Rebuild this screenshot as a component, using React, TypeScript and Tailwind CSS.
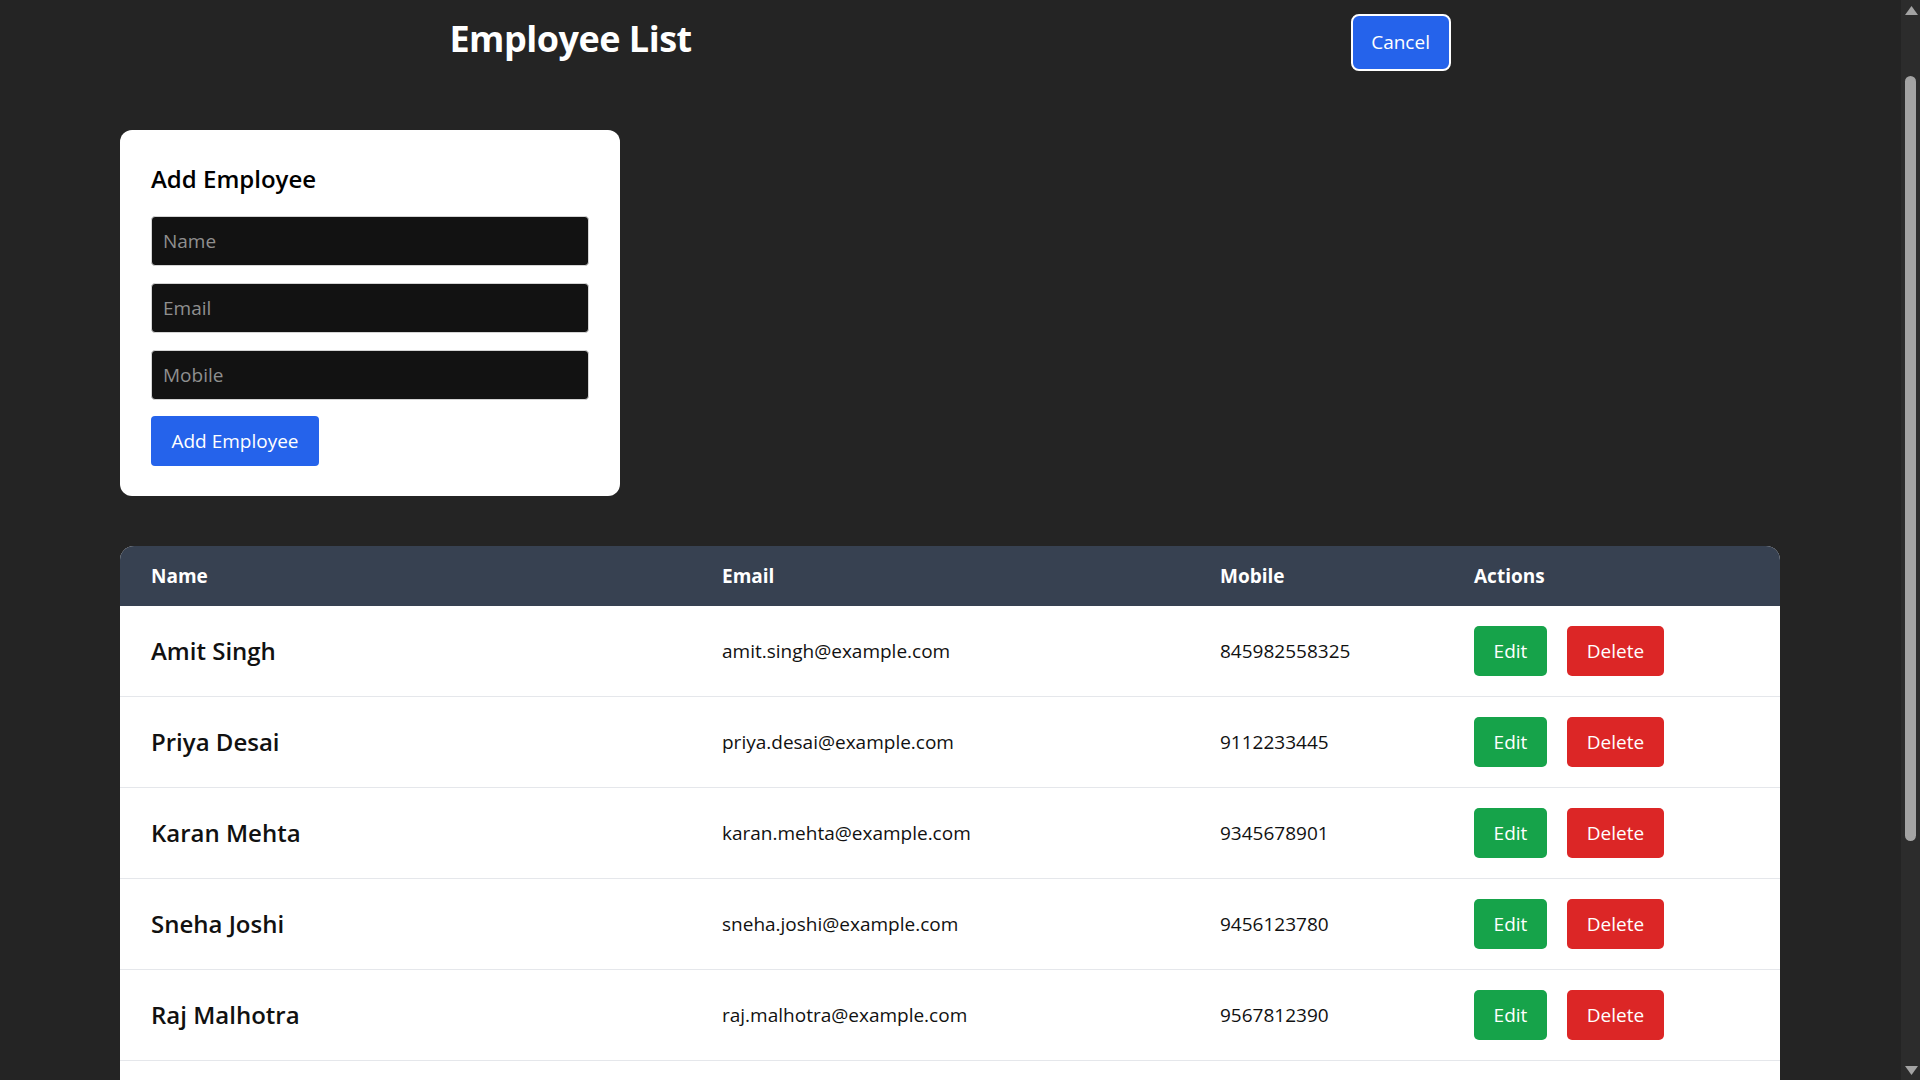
import { useEffect } from "react";

const employees = [
  { name: "Amit Singh", email: "amit.singh@example.com", mobile: "845982558325" },
  { name: "Priya Desai", email: "priya.desai@example.com", mobile: "9112233445" },
  { name: "Karan Mehta", email: "karan.mehta@example.com", mobile: "9345678901" },
  { name: "Sneha Joshi", email: "sneha.joshi@example.com", mobile: "9456123780" },
  { name: "Raj Malhotra", email: "raj.malhotra@example.com", mobile: "9567812390" },
  { name: "Neha Kapoor", email: "neha.kapoor@example.com", mobile: "9678123450" },
  { name: "Vikram Rao", email: "vikram.rao@example.com", mobile: "9789012345" },
  { name: "Anjali Verma", email: "anjali.verma@example.com", mobile: "9890123456" },
];

function FakeScrollbar() {
  return (
    <div className="fixed right-0 top-0 z-10 h-screen w-[19px] bg-[#2c2c2c]">
      <svg className="absolute left-[4px] top-[6px]" width="13" height="9" viewBox="0 0 13 9">
        <polygon points="6.5,0 13,9 0,9" fill="#a3a3a3" />
      </svg>
      <div className="absolute left-[4px] top-[76px] h-[765px] w-[11px] rounded-full bg-[#a3a3a3]" />
      <svg className="absolute bottom-[5px] left-[4px]" width="13" height="9" viewBox="0 0 13 9">
        <polygon points="0,0 13,0 6.5,9" fill="#a3a3a3" />
      </svg>
    </div>
  );
}

export default function App() {
  useEffect(() => {
    document.documentElement.classList.add("bg-[#242424]");
  }, []);

  return (
    <div className="min-h-screen bg-[#242424] pr-[20px] font-['Open_Sans',sans-serif]">
      <FakeScrollbar />
      <div className="px-[120px] pt-[14px] pb-[50px]">
        <header className="flex items-center justify-around">
          <h1 className="mb-[7px] text-[36px] leading-[48px] font-bold tracking-[-0.5px] text-white">
            Employee List
          </h1>
          <button className="h-[57px] w-[100px] rounded-[8px] border-2 border-white bg-[#2563eb] text-[19px] text-white">
            Cancel
          </button>
        </header>

        <div className="mt-[59px] w-[500px] rounded-[12px] bg-white px-[31px] pt-[33px] pb-[30px]">
          <h2 className="mb-[21px] text-[24px] leading-[32px] font-semibold text-black">Add Employee</h2>
          <div className="flex flex-col gap-[17px]">
            {["Name", "Email", "Mobile"].map((p) => (
              <input
                key={p}
                placeholder={p}
                className="h-[50px] w-full rounded-[4px] border border-[#d4d4d4] bg-[#121212] px-[11px] text-[19px] text-white placeholder:text-[#8f8f8f] outline-none"
              />
            ))}
          </div>
          <button className="mt-[16px] h-[50px] w-[168px] rounded-[4px] bg-[#2563eb] text-[19px] text-white">
            Add Employee
          </button>
        </div>

        <div className="mt-[50px] overflow-hidden rounded-t-[14px] bg-white">
          <div className="grid h-[60px] grid-cols-[571px_498px_254px_337px] items-center bg-[#374151] text-[19px] font-bold text-white">
            <div className="pl-[31px]">Name</div>
            <div className="pl-[31px]">Email</div>
            <div className="pl-[31px]">Mobile</div>
            <div className="pl-[31px]">Actions</div>
          </div>
          {employees.map((e) => (
            <div
              key={e.email}
              className="grid h-[91px] grid-cols-[571px_498px_254px_337px] items-center border-b border-[#e5e7eb] text-[#111111]"
            >
              <div className="pl-[31px] text-[24px] font-semibold">{e.name}</div>
              <div className="pl-[31px] text-[19px]">{e.email}</div>
              <div className="pl-[31px] text-[19px]">{e.mobile}</div>
              <div className="flex items-center gap-[20px] pl-[31px]">
                <button className="h-[50px] w-[73px] rounded-[5px] bg-[#16a34a] text-[19px] text-white">Edit</button>
                <button className="h-[50px] w-[97px] rounded-[5px] bg-[#dc2626] text-[19px] text-white">Delete</button>
              </div>
            </div>
          ))}
        </div>
      </div>
    </div>
  );
}
